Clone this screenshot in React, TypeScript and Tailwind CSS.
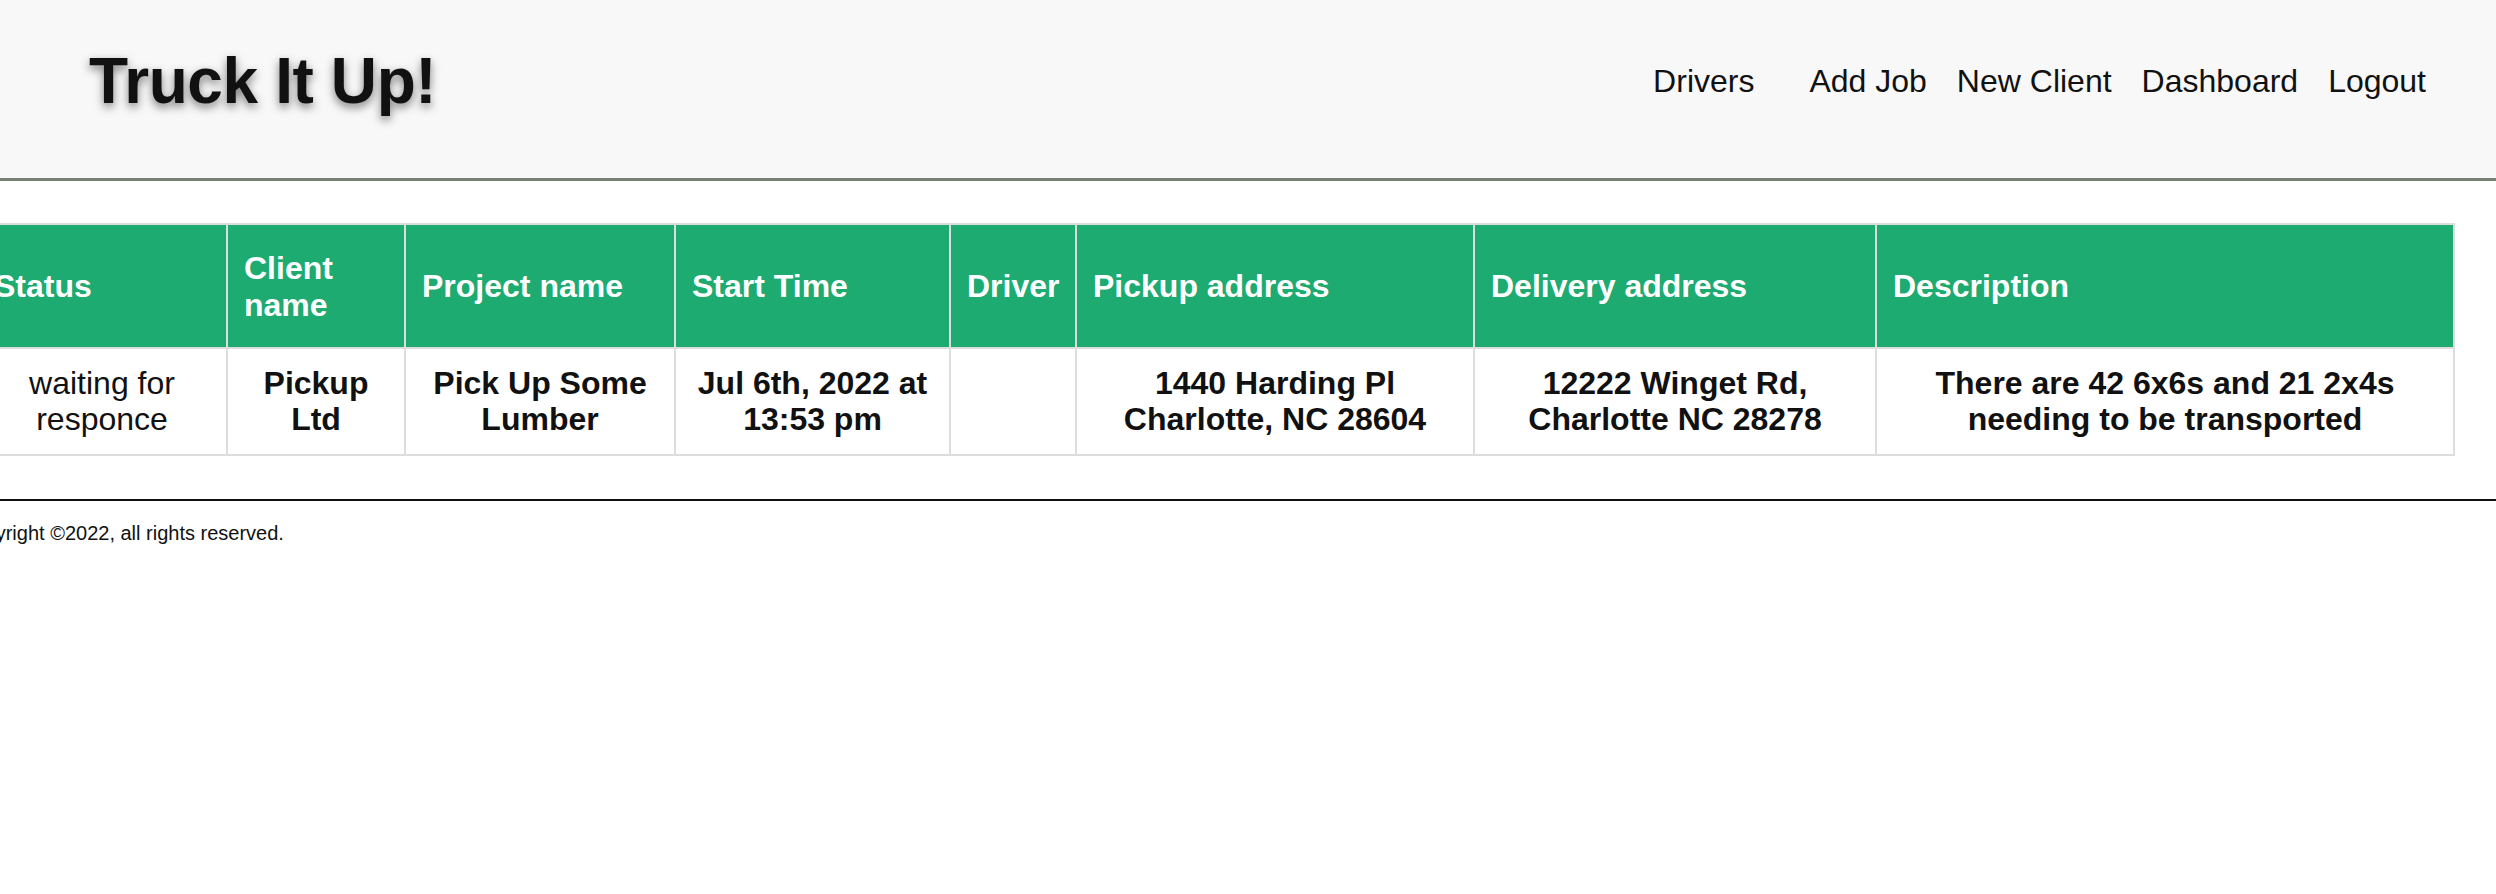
const jobs = [
  {
    status: "waiting for responce",
    client: "Pickup Ltd",
    project: "Pick Up Some Lumber",
    start: "Jul 6th, 2022 at 13:53 pm",
    driver: "",
    pickup: "1440 Harding Pl Charlotte, NC 28604",
    delivery: "12222 Winget Rd, Charlotte NC 28278",
    description: "There are 42 6x6s and 21 2x4s needing to be transported",
  },
];

const columns = [
  { label: "Status", width: "w-[250px]" },
  { label: "Client name", width: "w-[178px]" },
  { label: "Project name", width: "w-[270px]" },
  { label: "Start Time", width: "w-[275px]" },
  { label: "Driver", width: "w-[126px]" },
  { label: "Pickup address", width: "w-[398px]" },
  { label: "Delivery address", width: "w-[402px]" },
  { label: "Description", width: "w-[578px]" },
];

function Header() {
  return (
    <header className="h-[181px] bg-[#f8f8f8] border-b-[3px] border-[#767f71] flex items-center justify-between pl-[89px] pr-[70px] pb-[16px]">
      <h1 className="text-[64px] font-bold tracking-[-0.4px] text-[#111] [text-shadow:0_4px_10px_rgba(0,0,0,0.5)]">
        Truck It Up!
      </h1>
      <nav className="flex items-center gap-[30px] text-[32px] text-[#111]">
        <a className="mr-[25px]">Drivers</a>
        <a>Add Job</a>
        <a>New Client</a>
        <a>Dashboard</a>
        <a>Logout</a>
      </nav>
    </header>
  );
}

function JobsTable() {
  return (
    <table className="table-fixed border-collapse w-[2478px] ml-[-24px] mt-[42px]">
      <thead>
        <tr>
          {columns.map((col) => (
            <th
              key={col.label}
              className={`${col.width} border-2 border-[#ddd] bg-[#1dab72] text-white text-left font-bold text-[32px] leading-[1.15] px-[16px] pt-[25px] pb-[23px] align-middle`}
            >
              {col.label}
            </th>
          ))}
        </tr>
      </thead>
      <tbody>
        {jobs.map((job, i) => (
          <tr key={i} className="text-[32px] leading-[1.15] text-[#111] text-center">
            <td className="border-2 border-[#ddd] p-[16px]">{job.status}</td>
            <td className="border-2 border-[#ddd] p-[16px] font-bold">{job.client}</td>
            <td className="border-2 border-[#ddd] p-[16px] font-bold">{job.project}</td>
            <td className="border-2 border-[#ddd] p-[16px] font-bold">{job.start}</td>
            <td className="border-2 border-[#ddd] p-[16px] font-bold">{job.driver}</td>
            <td className="border-2 border-[#ddd] p-[16px] font-bold">{job.pickup}</td>
            <td className="border-2 border-[#ddd] p-[16px] font-bold">{job.delivery}</td>
            <td className="border-2 border-[#ddd] p-[16px] font-bold">{job.description}</td>
          </tr>
        ))}
      </tbody>
    </table>
  );
}

export default function App() {
  return (
    <div className="min-h-screen bg-white overflow-x-hidden font-['Liberation_Sans',Arial,sans-serif]">
      <Header />
      <JobsTable />
      <footer className="mt-[43px] border-t-2 border-[#111] pt-[17px]">
        <p className="ml-[-41px] text-[20px] text-[#111]">Copyright ©2022, all rights reserved.</p>
      </footer>
    </div>
  );
}
